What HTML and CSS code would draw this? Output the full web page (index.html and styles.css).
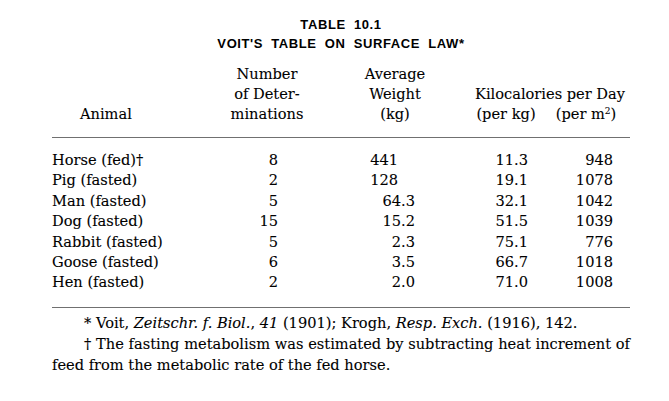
FILE: index.html
```html
<!DOCTYPE html>
<html lang="en">
<head>
<meta charset="utf-8">
<title>Table 10.1 — Voit's Table on Surface Law</title>
<link rel="stylesheet" href="styles.css">
</head>
<body>
<main class="page">
  <header class="caption">
    <div class="caption-line">TABLE 10.1</div>
    <div class="caption-line">VOIT'S TABLE ON SURFACE LAW*</div>
  </header>

  <div class="grid thead">
    <div class="h-animal">Animal</div>
    <div class="h-num">Number<br>of Deter-<br>minations</div>
    <div class="h-weight">Average<br>Weight<br>(kg)</div>
    <div class="h-kcal">Kilocalories per Day</div>
    <div class="h-kg">(per kg)</div>
    <div class="h-m2">(per m<sup>2</sup>)</div>
  </div>

  <div class="grid tbody">
    <div class="c-a">Horse (fed)†</div><div class="c-n">8</div><div class="c-w int">441</div><div class="c-k">11.3</div><div class="c-m">948</div>
    <div class="c-a">Pig (fasted)</div><div class="c-n">2</div><div class="c-w int">128</div><div class="c-k">19.1</div><div class="c-m">1078</div>
    <div class="c-a">Man (fasted)</div><div class="c-n">5</div><div class="c-w">64.3</div><div class="c-k">32.1</div><div class="c-m">1042</div>
    <div class="c-a">Dog (fasted)</div><div class="c-n">15</div><div class="c-w">15.2</div><div class="c-k">51.5</div><div class="c-m">1039</div>
    <div class="c-a">Rabbit (fasted)</div><div class="c-n">5</div><div class="c-w">2.3</div><div class="c-k">75.1</div><div class="c-m">776</div>
    <div class="c-a">Goose (fasted)</div><div class="c-n">6</div><div class="c-w">3.5</div><div class="c-k">66.7</div><div class="c-m">1018</div>
    <div class="c-a">Hen (fasted)</div><div class="c-n">2</div><div class="c-w">2.0</div><div class="c-k">71.0</div><div class="c-m">1008</div>
  </div>

  <div class="notes">
    <p>* Voit, <i>Zeitschr. f. Biol.</i>, <i>41</i> (1901); Krogh, <i>Resp. Exch.</i> (1916), 142.</p>
    <p>† The fasting metabolism was estimated by subtracting heat increment of feed from the metabolic rate of the fed horse.</p>
  </div>
</main>
</body>
</html>
```

FILE: styles.css
```css
html, body {
  margin: 0;
  padding: 0;
  background: #ffffff;
}

body {
  color: #000000;
  font-family: "DejaVu Serif", "Liberation Serif", serif;
  font-size: 14.6px;
  -webkit-text-stroke: 0.1px #000000;
}

.page {
  width: 578px;
  padding: 15px 39px 0 52px;
}

.caption {
  text-align: center;
  font-family: "Liberation Sans", Arial, sans-serif;
  font-weight: bold;
  font-size: 13px;
  line-height: 19px;
  letter-spacing: 0.6px;
  word-spacing: 4px;
  -webkit-text-stroke: 0;
}

.grid {
  display: grid;
  grid-template-columns: 170px 90px 38px 90px 30px 72px 88px;
}

.thead {
  margin-top: 11px;
  grid-template-rows: repeat(3, 20px);
  line-height: 20px;
  padding-bottom: 13px;
  border-bottom: 1px solid #707070;
}

.h-animal {
  grid-column: 1;
  grid-row: 3;
  padding-left: 28px;
}

.h-num {
  grid-column: 2;
  grid-row: 1 / 4;
  text-align: center;
}

.h-weight {
  grid-column: 4;
  grid-row: 1 / 4;
  text-align: center;
}

.h-kcal {
  grid-column: 6 / 8;
  grid-row: 2;
  text-align: center;
  white-space: nowrap;
}

.h-kg {
  grid-column: 6;
  grid-row: 3;
  text-align: center;
  white-space: nowrap;
}

.h-m2 {
  grid-column: 7;
  grid-row: 3;
  text-align: center;
  white-space: nowrap;
}

.h-m2 sup {
  font-size: 9px;
  line-height: 0;
  vertical-align: 5px;
}

.tbody {
  grid-auto-rows: 20.4px;
  line-height: 20.4px;
  padding-top: 12px;
  padding-bottom: 14px;
  border-bottom: 1px solid #707070;
}

.c-a {
  grid-column: 1;
  white-space: nowrap;
}

.c-n {
  grid-column: 2;
  text-align: right;
  padding-right: 34px;
}

.c-w {
  grid-column: 4;
  text-align: right;
  padding-right: 25px;
}

.c-w.int {
  padding-right: 42px;
}

.c-k {
  grid-column: 6;
  text-align: right;
  padding-right: 14px;
}

.c-m {
  grid-column: 7;
  text-align: right;
  padding-right: 17px;
}

.notes {
  margin-top: 4px;
  line-height: 21px;
  text-align: justify;
}

.notes p {
  margin: 0;
  text-indent: 32px;
}
```
